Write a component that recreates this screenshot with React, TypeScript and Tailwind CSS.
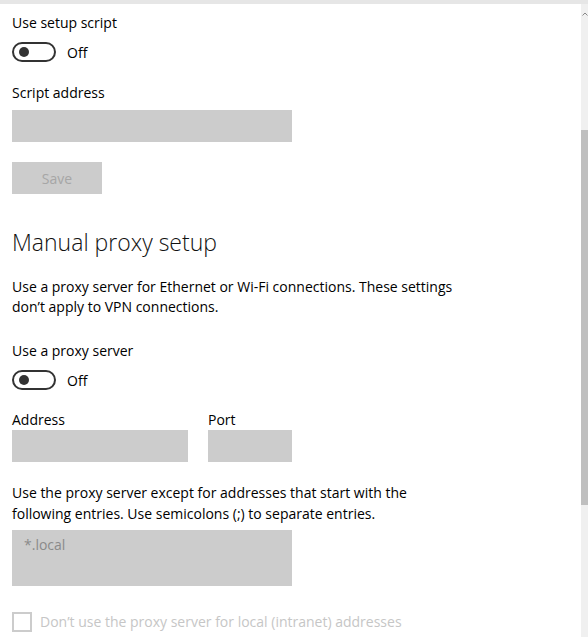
import React from "react";

const Toggle = () => (
  <div className="flex items-center h-5">
    <div className="w-[44px] h-[20px] rounded-full border-2 border-[#333333] flex items-center pl-[5px] box-border">
      <div className="w-[10px] h-[10px] rounded-full bg-[#333333]" />
    </div>
    <span className="ml-[11px] text-black">Off</span>
  </div>
);

export default function App() {
  return (
    <div
      className="w-[588px] h-[637px] bg-white relative overflow-hidden text-[14px] text-black"
      style={{ fontFamily: '"Open Sans", "Noto Sans", sans-serif' }}
    >
      <div className="h-[4px] bg-[#e6e6e6]" />
      <div className="flex">
        <div className="flex-1 pl-[12px]">
          <div className="mt-[9px] leading-[20px]">Use setup script</div>
          <div className="mt-[9px]"><Toggle /></div>
          <div className="mt-[21px] leading-[20px]">Script address</div>
          <div className="mt-[7px] w-[280px] h-[32px] bg-[#cccccc]" />
          <div className="mt-[20px] w-[90px] h-[32px] bg-[#cccccc] flex items-center justify-center text-[#a6a6a6]">Save</div>
          <div className="mt-[32px] text-[23px] font-light leading-[32px] text-[#111]">Manual proxy setup</div>
          <div className="mt-[19px] leading-[20px] w-[460px]">
            Use a proxy server for Ethernet or Wi-Fi connections. These settings don’t apply to VPN connections.
          </div>
          <div className="mt-[24px] leading-[20px]">Use a proxy server</div>
          <div className="mt-[9px]"><Toggle /></div>
          <div className="flex gap-[20px] mt-[20px]">
            <div>
              <div className="leading-[20px]">Address</div>
              <div className="w-[176px] h-[32px] bg-[#cccccc]" />
            </div>
            <div>
              <div className="leading-[20px]">Port</div>
              <div className="w-[84px] h-[32px] bg-[#cccccc]" />
            </div>
          </div>
          <div className="mt-[20px] leading-[21px] w-[420px]">
            Use the proxy server except for addresses that start with the following entries. Use semicolons (;) to separate entries.
          </div>
          <div className="mt-[6px] w-[280px] h-[56px] bg-[#cccccc] px-[12px] pt-[5px] text-[#8a8a8a] leading-[20px]">*.local</div>
          <div className="mt-[26px] flex items-center">
            <div className="w-[20px] h-[20px] border-2 border-[#cccccc]" />
            <span className="ml-[8px] text-[#c6c6c6] leading-[20px]">Don’t use the proxy server for local (intranet) addresses</span>
          </div>
        </div>
        <div className="w-[7px] h-[633px] bg-[#f0f0f0] relative">
          <div className="absolute top-[126px] left-0 w-[7px] h-[375px] bg-[#bfbfbf]" />
          <svg className="absolute top-[8px] left-[1px]" width="6" height="4" viewBox="0 0 6 4">
            <path d="M0.5 3.5 L3 1 L5.5 3.5" stroke="#888" strokeWidth="1" fill="none" />
          </svg>
        </div>
      </div>
    </div>
  );
}
